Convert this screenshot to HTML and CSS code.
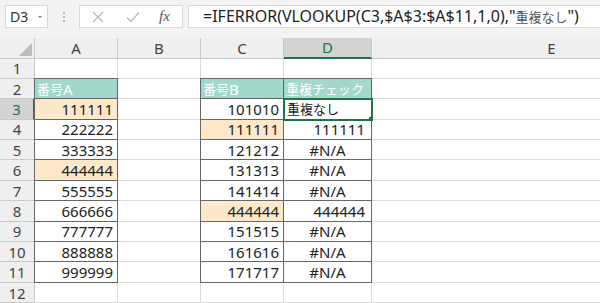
FILE: index.html
```html
<!DOCTYPE html>
<html lang="ja">
<head>
<meta charset="utf-8">
<title>Sheet</title>
<link rel="stylesheet" href="styles.css">
</head>
<body>
<div class="toolbar">
  <div class="namebox"><span>D3</span><span class="caret"></span></div>
  <div class="grip"><i></i><i></i><i></i></div>
  <div class="fxbox">
    <svg class="ico-x" width="12" height="12" viewBox="0 0 12 12"><path d="M1 1 L11 11 M11 1 L1 11" stroke="#b5b5b5" stroke-width="1.2" fill="none"/></svg>
    <svg class="ico-ok" width="14" height="12" viewBox="0 0 14 12"><path d="M1 6.5 L5 10.5 L13 1.5" stroke="#b5b5b5" stroke-width="1.2" fill="none"/></svg>
    <span class="fx">fx</span>
  </div>
  <div class="formula">=IFERROR(VLOOKUP(C3,$A$3:$A$11,1,0),"<span class="fjp">重複なし</span>")</div>
</div>
<div class="sheet">
  <div class="corner"><span class="tri"></span></div>
  <div class="ch">A</div><div class="ch">B</div><div class="ch">C</div><div class="ch ch-sel">D</div><div class="ch">E</div>

  <div class="rh">1</div><div class="c"></div><div class="c"></div><div class="c"></div><div class="c"></div><div class="c"></div>

  <div class="rh">2</div>
  <div class="c t tl tt hd"><span class="jp">番号</span>A</div>
  <div class="c"></div>
  <div class="c t tl tt hd"><span class="jp">番号</span>B</div>
  <div class="c t tt hd"><span class="jp">重複チェック</span></div>
  <div class="c"></div>

  <div class="rh rh-sel">3</div>
  <div class="c t tl hl r">111111</div>
  <div class="c"></div>
  <div class="c t tl r">101010</div>
  <div class="c t sel"><span class="jp">重複なし</span></div>
  <div class="c"></div>

  <div class="rh">4</div>
  <div class="c t tl r">222222</div>
  <div class="c"></div>
  <div class="c t tl hl r">111111</div>
  <div class="c t rd">111111</div>
  <div class="c"></div>

  <div class="rh">5</div>
  <div class="c t tl r">333333</div>
  <div class="c"></div>
  <div class="c t tl r">121212</div>
  <div class="c t na">#N/A</div>
  <div class="c"></div>

  <div class="rh">6</div>
  <div class="c t tl hl r">444444</div>
  <div class="c"></div>
  <div class="c t tl r">131313</div>
  <div class="c t na">#N/A</div>
  <div class="c"></div>

  <div class="rh">7</div>
  <div class="c t tl r">555555</div>
  <div class="c"></div>
  <div class="c t tl r">141414</div>
  <div class="c t na">#N/A</div>
  <div class="c"></div>

  <div class="rh">8</div>
  <div class="c t tl r">666666</div>
  <div class="c"></div>
  <div class="c t tl hl r">444444</div>
  <div class="c t rd">444444</div>
  <div class="c"></div>

  <div class="rh">9</div>
  <div class="c t tl r">777777</div>
  <div class="c"></div>
  <div class="c t tl r">151515</div>
  <div class="c t na">#N/A</div>
  <div class="c"></div>

  <div class="rh">10</div>
  <div class="c t tl r">888888</div>
  <div class="c"></div>
  <div class="c t tl r">161616</div>
  <div class="c t na">#N/A</div>
  <div class="c"></div>

  <div class="rh">11</div>
  <div class="c t tl r">999999</div>
  <div class="c"></div>
  <div class="c t tl r">171717</div>
  <div class="c t na">#N/A</div>
  <div class="c"></div>

  <div class="rh">12</div><div class="c"></div><div class="c"></div><div class="c"></div><div class="c"></div><div class="c"></div>
</div>
</body>
</html>
```
FILE: styles.css
```css
html, body {
  margin: 0;
  padding: 0;
}
body {
  width: 600px;
  height: 303px;
  overflow: hidden;
  background: #ffffff;
  font-family: "Noto Sans", "Noto Sans CJK JP", sans-serif;
  color: #222;
}
.toolbar {
  height: 38px;
  box-sizing: border-box;
  background: #f3f3f3;
  display: flex;
  align-items: flex-start;
  padding-top: 5px;
  overflow: hidden;
}
.namebox {
  margin-left: 5px;
  width: 43px;
  height: 23px;
  box-sizing: border-box;
  background: #fff;
  border: 1px solid #d8d8d8;
  display: flex;
  align-items: center;
  justify-content: space-between;
  padding: 0 5px 0 4px;
  font-size: 14px;
  color: #333;
}
.caret {
  width: 0;
  height: 0;
  border-left: 2px solid transparent;
  border-right: 2px solid transparent;
  border-top: 2px solid #777;
}
.grip {
  width: 31px;
  display: flex;
  flex-direction: column;
  align-items: center;
  gap: 2px;
  padding-top: 7px;
}
.grip i {
  width: 2px;
  height: 2px;
  background: #b8b8b8;
}
.fxbox {
  width: 104px;
  height: 23px;
  box-sizing: border-box;
  background: #fff;
  border: 1px solid #d8d8d8;
  display: flex;
  align-items: center;
  padding-left: 12px;
}
.ico-x { margin-right: 22px; }
.ico-ok { margin-right: 19px; }
.fx {
  font-family: "Liberation Serif", serif;
  font-style: italic;
  font-size: 15px;
  color: #555;
}
.formula {
  margin-left: 5px;
  flex: 1;
  height: 23px;
  box-sizing: border-box;
  background: #fff;
  border: 1px solid #d8d8d8;
  border-right: none;
  padding-left: 14px;
  font-size: 16px;
  line-height: 21px;
  white-space: nowrap;
  color: #222;
}
.fjp {
  font-family: "Noto Sans CJK JP", sans-serif;
  font-size: 13px;
  color: #555;
}

.sheet {
  width: 600px;
  overflow: hidden;
  display: grid;
  grid-template-columns: 35px 83px 83px 83px 88px 360px;
  grid-template-rows: 20.5px;
  grid-auto-rows: 20.4px;
}
.corner, .ch, .rh, .c {
  box-sizing: border-box;
  border-right: 1px solid #dadada;
  border-bottom: 1px solid #dadada;
  display: flex;
  align-items: center;
  overflow: hidden;
  white-space: nowrap;
}
.corner {
  background: #efefef;
  border-color: #c9c9c9;
  position: relative;
}
.tri {
  position: absolute;
  right: 2px;
  bottom: 2px;
  width: 0;
  height: 0;
  border-left: 13px solid transparent;
  border-bottom: 13px solid #bdbdbd;
}
.ch {
  background: #efefef;
  border-color: #c9c9c9;
  justify-content: center;
  font-size: 15px;
  color: #444;
}
.ch-sel {
  background: #d3d3d3;
  color: #217346;
  border-bottom: 2px solid #217346;
}
.rh {
  background: #efefef;
  border-color: #c9c9c9;
  justify-content: center;
  font-size: 15px;
  color: #444;
}
.rh-sel {
  background: #d3d3d3;
  color: #217346;
  border-right: 2px solid #217346;
}
.c {
  font-size: 15px;
  padding: 0 3px;
}
.t {
  border-right-color: #666;
  border-bottom-color: #666;
}
.tl { box-shadow: -1px 0 0 #666; }
.tt { box-shadow: 0 -1px 0 #666; }
.tl.tt { box-shadow: -1px 0 0 #666, 0 -1px 0 #666, -1px -1px 0 #666; }
.hd {
  background: #a2d7cb;
  color: #fff;
  padding-left: 2px;
}
.hl { background: #fde9c9; }
.r { justify-content: flex-end; padding-right: 4px; }
.rd { justify-content: flex-end; padding-right: 6px; }
.na { justify-content: center; }
.jp {
  font-family: "Noto Sans CJK JP", sans-serif;
  font-size: 13px;
}
.sel {
  position: relative;
  z-index: 2;
  outline: 2px solid #217346;
  outline-offset: -1px;
}
.sel::after {
  content: "";
  position: absolute;
  right: -4px;
  bottom: -4px;
  width: 5px;
  height: 5px;
  background: #217346;
  border: 1px solid #fff;
}
```
